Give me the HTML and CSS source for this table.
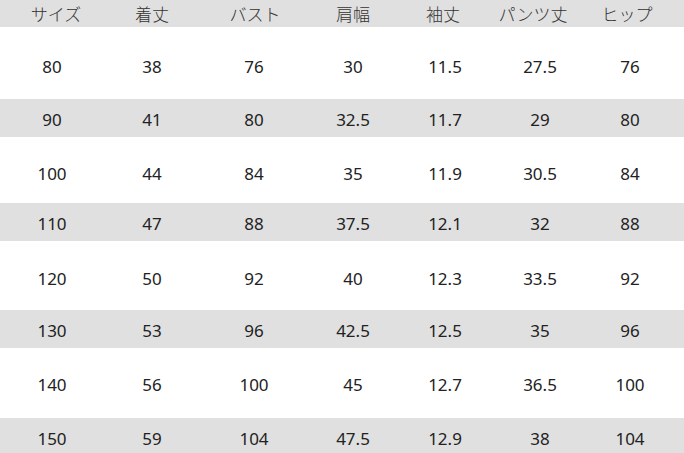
FILE: index.html
```html
<!DOCTYPE html>
<html lang="ja">
<head>
<meta charset="utf-8">
<link rel="stylesheet" href="styles.css">
</head>
<body>
<div class="table">
  <div class="row head"><span>サイズ</span><span>着丈</span><span>バスト</span><span>肩幅</span><span>袖丈</span><span>パンツ丈</span><span>ヒップ</span></div>
  <div class="row tall r1"><span>80</span><span>38</span><span>76</span><span>30</span><span>11.5</span><span>27.5</span><span>76</span></div>
  <div class="row gray"><span>90</span><span>41</span><span>80</span><span>32.5</span><span>11.7</span><span>29</span><span>80</span></div>
  <div class="row tall r2"><span>100</span><span>44</span><span>84</span><span>35</span><span>11.9</span><span>30.5</span><span>84</span></div>
  <div class="row gray"><span>110</span><span>47</span><span>88</span><span>37.5</span><span>12.1</span><span>32</span><span>88</span></div>
  <div class="row tall r3"><span>120</span><span>50</span><span>92</span><span>40</span><span>12.3</span><span>33.5</span><span>92</span></div>
  <div class="row gray"><span>130</span><span>53</span><span>96</span><span>42.5</span><span>12.5</span><span>35</span><span>96</span></div>
  <div class="row tall r4"><span>140</span><span>56</span><span>100</span><span>45</span><span>12.7</span><span>36.5</span><span>100</span></div>
  <div class="row gray"><span>150</span><span>59</span><span>104</span><span>47.5</span><span>12.9</span><span>38</span><span>104</span></div>
</div>
</body>
</html>
```

FILE: styles.css
```css
html, body {
  margin: 0;
  padding: 0;
  background: #ffffff;
  overflow: hidden;
}
body {
  width: 684px;
  height: 453px;
  font-family: "Noto Sans", "Noto Sans CJK JP", sans-serif;
  color: #222222;
  font-size: 17px;
}
.table {
  display: flex;
  flex-direction: column;
}
.row {
  display: grid;
  grid-template-columns: 104px 96px 108px 90px 94px 96px 84px 12px;
  align-items: center;
  justify-items: center;
}
.row span {
  line-height: 1;
  white-space: nowrap;
}
.head {
  height: 27px;
  background: #e0e0e0;
  color: #333333;
  font-family: "Noto Sans CJK JP", sans-serif;
  font-size: 17px;
  font-weight: 300;
  grid-template-columns: 112px 80px 126px 70px 110px 70px 118px;
}
.tall {
  background: #ffffff;
  padding-top: 6px;
  box-sizing: border-box;
}
.r1 { height: 72px; }
.r2 { height: 66px; }
.r3 { height: 69px; }
.r4 { height: 70px; padding-top: 3px; }
.gray {
  height: 38px;
  background: #e0e0e0;
  padding-top: 2px;
  box-sizing: border-box;
}
```
